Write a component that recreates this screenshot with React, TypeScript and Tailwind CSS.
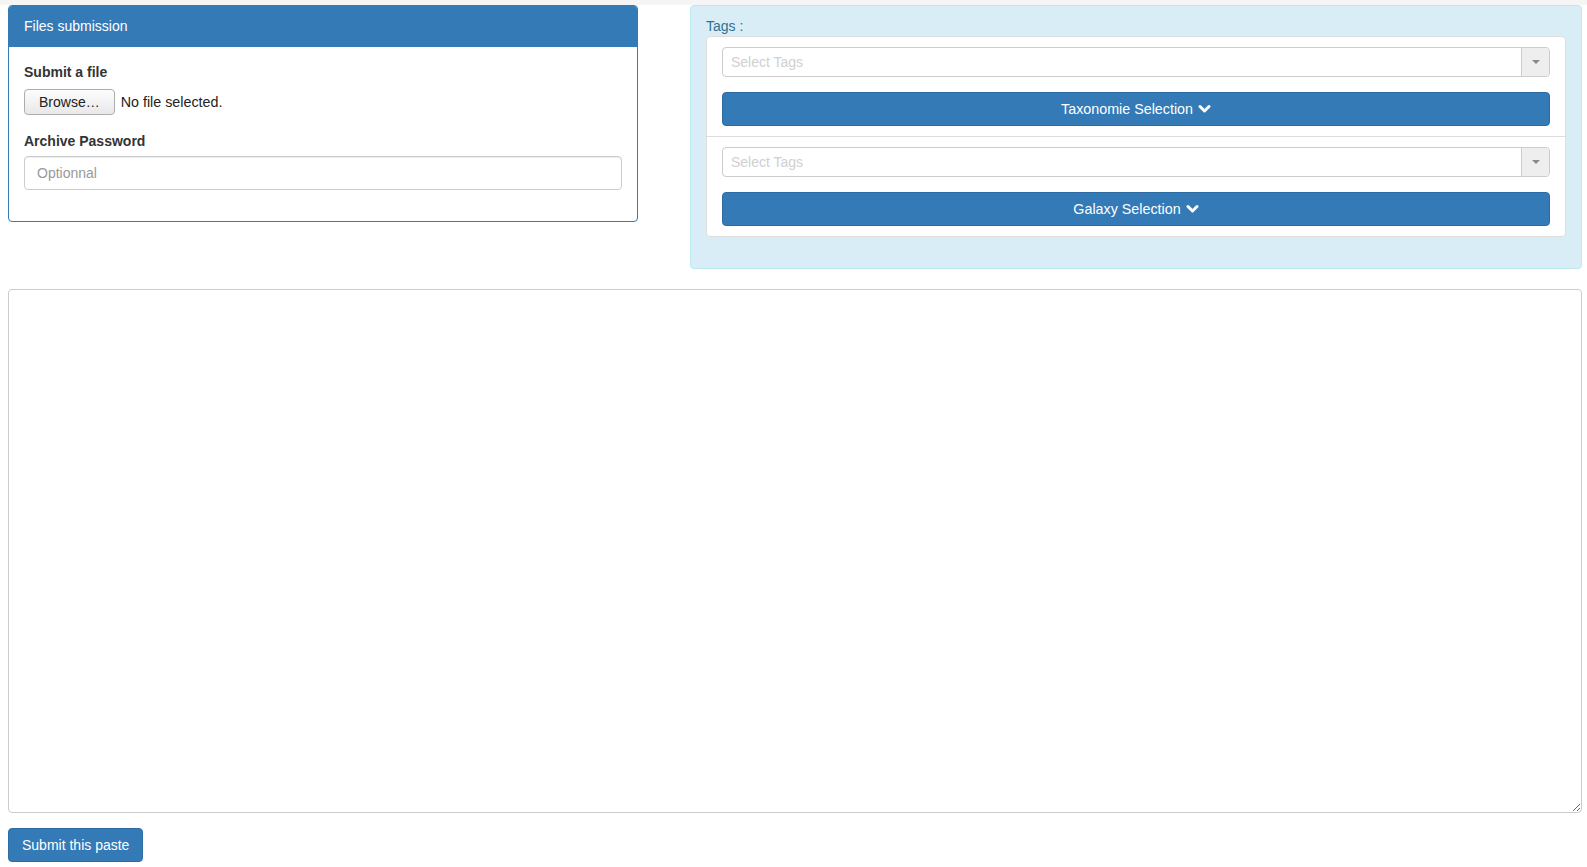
import { ChangeEvent, useState } from 'react'

function Chevron() {
  return (
    <svg width="13" height="10" viewBox="0 0 13 10" className="ml-[5px] inline-block">
      <polyline points="2,2.5 6.5,7 11,2.5" fill="none" stroke="white" strokeWidth="3" strokeLinecap="round" strokeLinejoin="round" />
    </svg>
  )
}

function TagSelect() {
  return (
    <div className="flex h-[30px] rounded-[4px] border border-[#ccc] bg-white">
      <div className="flex-1 px-[8px] leading-[28px] text-[#d0d0d0]">Select Tags</div>
      <div className="flex w-[28px] items-center justify-center rounded-r-[4px] border-l border-[#ccc] bg-[#eee]">
        <span className="h-0 w-0 border-x-[4px] border-t-[4px] border-x-transparent border-t-[#888]" />
      </div>
    </div>
  )
}

function SelectionBlock({ label }: { label: string }) {
  return (
    <div className="flex flex-col gap-[15px] px-[15px] py-[10px]">
      <TagSelect />
      <button className="flex h-[34px] items-center justify-center rounded-[4px] border border-[#2e6da4] bg-[#337ab7] text-[14.3px] text-white">
        {label}
        <Chevron />
      </button>
    </div>
  )
}

export default function App() {
  const [password, setPassword] = useState('')
  const [paste, setPaste] = useState('')

  return (
    <div className="bg-white text-[14px] leading-[20px] text-[#333]" style={{ fontFamily: '"Liberation Sans", Arial, sans-serif' }}>
      <div className="h-[5px] bg-[#f5f5f5]" />

      <div className="pl-[8px] pr-[5px] pb-[5px]">
        {/* Top row: file panel + tags */}
        <div className="flex items-start justify-between">
          {/* Files submission */}
          <div className="w-[630px] shrink-0 overflow-hidden rounded-[4px] border border-[#337ab7]">
            <div className="h-[41px] border-b border-[#337ab7] bg-[#337ab7] px-[15px] py-[10px] text-white">Files submission</div>
            <div className="px-[15px] pt-[15px] pb-[31px]">
              <label className="block font-bold">Submit a file</label>
              <div className="mt-[7px] flex items-center gap-[6px]">
                <button className="h-[26px] rounded-[4px] border border-[#adadad] bg-gradient-to-b from-[#fdfdfd] to-[#e8e8e8] px-[14px] text-[14px] text-[#222]">Browse…</button>
                <span className="text-[14.3px] text-[#222]">No file selected.</span>
              </div>
              <label className="mt-[16px] block font-bold">Archive Password</label>
              <input
                value={password}
                onChange={(e: ChangeEvent<HTMLInputElement>) => setPassword(e.target.value)}
                placeholder="Optionnal"
                className="mt-[5px] block h-[34px] w-full rounded-[4px] border border-[#ccc] px-[12px] shadow-[inset_0_1px_1px_rgba(0,0,0,0.075)] outline-none placeholder:text-[#999]"
              />
            </div>
          </div>

          {/* Tags */}
          <div className="w-[892px] shrink-0 rounded-[4px] border border-[#bce8f1] bg-[#d9edf7] px-[15px] pt-[10px] pb-[31px]">
            <div className="text-[#31708f]">Tags :</div>
            <div className="rounded-[4px] border border-[#ddd] bg-white">
              <SelectionBlock label="Taxonomie Selection" />
              <div className="border-t border-[#ddd]" />
              <SelectionBlock label="Galaxy Selection" />
            </div>
          </div>
        </div>

        {/* Paste textarea */}
        <textarea
          value={paste}
          onChange={(e: ChangeEvent<HTMLTextAreaElement>) => setPaste(e.target.value)}
          className="mt-[20px] block h-[524px] w-full rounded-[4px] border border-[#ccc] p-[6px] outline-none"
        />

        <div className="mt-[15px] flex">
          <button className="h-[34px] rounded-[4px] border border-[#2e6da4] bg-[#337ab7] px-[13px] text-white">Submit this paste</button>
        </div>
      </div>
    </div>
  )
}
